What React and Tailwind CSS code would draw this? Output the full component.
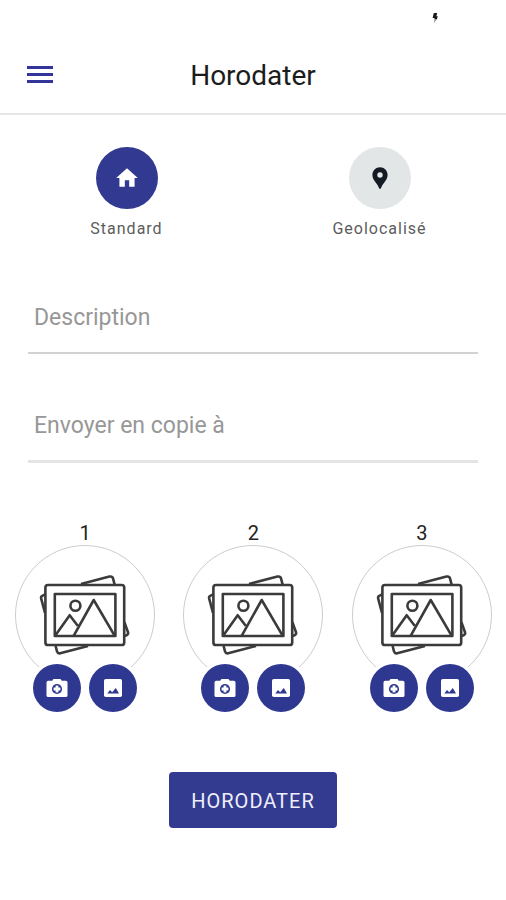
import { MdHome, MdLocationPin } from "react-icons/md";

const slots = [1, 2, 3];

function StatusBar() {
  return (
    <div className="flex h-9 items-center justify-end pr-[67px]">
      <svg viewBox="0 0 8 12" className="h-3 w-2">
        <path d="M2.8 1H6.2L5.4 4.2H6.8L5.8 7.4H3.6L3.4 6H1.6Z" fill="#1a1a1a" />
        <path d="M3.6 7.2 5.4 7.6 2.6 11.6Z" fill="#8a8a8a" />
      </svg>
    </div>
  );
}

function Header() {
  return (
    <header className="grid h-[79px] grid-cols-[1fr_auto_1fr] items-center border-b-2 border-[#e6e6e6] px-[27px]">
      <button aria-label="Menu" className="flex w-[26px] flex-col gap-1">
        <span className="h-[3px] bg-[#34359a]" />
        <span className="h-[3px] bg-[#34359a]" />
        <span className="h-[3px] bg-[#34359a]" />
      </button>
      <h1 className="pt-0.5 text-[28px] leading-8 text-[#1c1c1c]">Horodater</h1>
    </header>
  );
}

function ModeButton({ icon: Icon, label, active }) {
  return (
    <button className="flex flex-col items-center gap-2">
      <span
        className={`flex size-[62px] items-center justify-center rounded-full ${
          active ? "bg-[#313a90] text-white" : "bg-[#e3e6e6] text-[#131a24]"
        }`}
      >
        <Icon className="size-[26px]" />
      </span>
      <span className="text-base leading-6 tracking-[1px] text-[#5c5c5c]">
        {label}
      </span>
    </button>
  );
}

function Field({ id, label, className }) {
  return (
    <div className={`grid items-center ${className}`}>
      {/* l'étiquette sert de placeholder et disparaît à la saisie */}
      <input
        id={id}
        type="text"
        placeholder=" "
        className="peer col-start-1 row-start-1 h-[71px] w-full px-1.5 text-[23px] text-[#333] outline-none"
      />
      <label
        htmlFor={id}
        className="invisible col-start-1 row-start-1 px-1.5 pt-0.5 text-[23px] leading-8 text-[#979797] peer-placeholder-shown:visible"
      >
        {label}
      </label>
    </div>
  );
}

function PicturesDrawing() {
  return (
    <svg
      viewBox="0 0 140 140"
      className="size-[140px]"
      fill="none"
      stroke="#3b3b3b"
      strokeWidth="2.6"
      strokeLinejoin="round"
    >
      <circle cx="70" cy="70" r="69.5" stroke="#cccccc" strokeWidth="1" />
      {/* carte arrière, inclinée */}
      <path d="M66 39 94.5 31.6Q97.3 31 98 33.4L99.6 39.5" />
      <path d="M30 49.5 27.6 50.6Q25.6 51.4 26.2 53.6L30 68" />
      <path d="M109.3 77 113 87.2Q113.6 89.4 111.6 90.2L109.3 91" />
      <path d="M40.6 101 42 106.4Q42.8 108.8 45.2 108.2L73 101" />
      {/* cadre */}
      <rect x="30.4" y="40" width="78.8" height="60" rx="2.6" />
      <rect x="39.8" y="49" width="60.6" height="42" />
      <circle cx="60.4" cy="60.8" r="5" />
      <path d="M40.3 90.6 54.7 70.2 62.7 80.7M58.8 90.6 78.7 55 99.6 90.6" />
    </svg>
  );
}

function CameraIcon() {
  return (
    <svg viewBox="0 0 24 24" className="size-6">
      <path
        fill="currentColor"
        d="M8.5 3h7l1.300 1.700h4a1.700 1.700 0 0 1 1.700 1.700v13a1.700 1.700 0 0 1-1.700 1.700H3.200a1.700 1.700 0 0 1-1.700-1.700v-13a1.700 1.700 0 0 1 1.700-1.700h4z"
      />
      <circle cx="12" cy="13" r="4.3" fill="none" stroke="#2f3890" strokeWidth="1.6" />
      <path
        fill="#2f3890"
        d="M8.600 9.600h2v2h-2zM13.400 9.600h2v2h-2zM8.600 14.400h2v2h-2zM13.400 14.400h2v2h-2z"
      />
    </svg>
  );
}

function ImageIcon() {
  return (
    <svg viewBox="0 0 24 24" className="size-6">
      <rect x="3" y="3" width="18" height="18" rx="1.8" fill="currentColor" />
      <path fill="#2f3890" d="M6.300 17.400 9 13.900 11.200 16.200 14.800 12 18 17.400Z" />
    </svg>
  );
}

function RoundButton({ icon: Icon, label }) {
  return (
    <button
      aria-label={label}
      className="flex size-12 items-center justify-center rounded-full bg-[#2f3890] text-white"
    >
      <Icon />
    </button>
  );
}

function PhotoSlot({ number }) {
  return (
    <section className="flex flex-col items-center">
      <h2 className="text-xl leading-6 text-[#222]">{number}</h2>
      <div className="h-[122px] overflow-hidden">
        <PicturesDrawing />
      </div>
      {/* les boutons mordent sur le bas du cercle */}
      <div className="relative -mt-[3px] flex gap-2">
        <RoundButton icon={CameraIcon} label={`Prendre la photo ${number}`} />
        <RoundButton icon={ImageIcon} label={`Choisir l'image ${number}`} />
      </div>
    </section>
  );
}

export default function App() {
  return (
    <div className="min-h-screen bg-white font-['Roboto',sans-serif]">
      <StatusBar />
      <Header />
      <main>
        <div className="grid grid-cols-2 pt-8">
          <ModeButton icon={MdHome} label="Standard" active />
          <ModeButton icon={MdLocationPin} label="Geolocalisé" />
        </div>

        <div className="px-7 pt-10">
          <Field
            id="description"
            label="Description"
            className="border-b-2 border-[#d2d2d2]"
          />
          <Field
            id="copie"
            label="Envoyer en copie à"
            className="mt-[35px] border-b-[3px] border-[#e4e4e4]"
          />
        </div>

        <div className="grid grid-cols-3 pt-[58px] pl-px">
          {slots.map((number) => (
            <PhotoSlot key={number} number={number} />
          ))}
        </div>

        <div className="flex justify-center pt-[60px] pb-10">
          <button className="h-14 rounded-[4px] bg-[#323b8f] px-[22px] pt-0.5 text-xl tracking-wider text-[#eeeefb]">
            HORODATER
          </button>
        </div>
      </main>
    </div>
  );
}
